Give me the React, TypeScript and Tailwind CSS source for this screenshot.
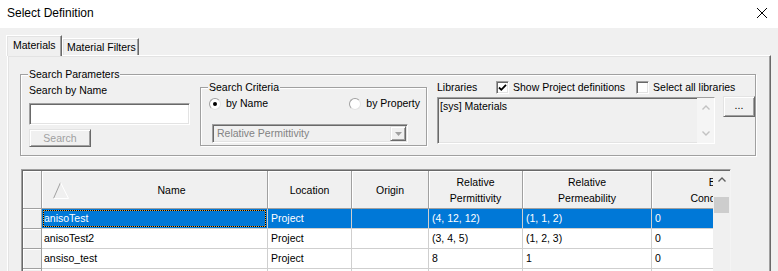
import React from "react";

// classic win32 3D edges
const raised =
  "border border-t-[#e3e3e3] border-l-[#e3e3e3] border-r-[#696969] border-b-[#696969] shadow-[inset_1px_1px_0_#ffffff,inset_-1px_-1px_0_#a0a0a0]";
const sunken =
  "border border-t-[#a0a0a0] border-l-[#a0a0a0] border-r-white border-b-white shadow-[inset_1px_1px_0_#696969,inset_-1px_-1px_0_#e3e3e3]";
const etched = "border border-[#a0a0a0] shadow-[inset_1px_1px_0_#ffffff,1px_1px_0_#ffffff]";

const columns = [
  { cls: "w-[226px]", head: ["Name"] },
  { cls: "w-[84px]", head: ["Location"] },
  { cls: "w-[77px]", head: ["Origin"] },
  { cls: "w-[94px]", head: ["Relative", "Permittivity"] },
  { cls: "w-[129px]", head: ["Relative", "Permeability"] },
  { cls: "w-[135px]", head: ["Bulk", "Conductivity"] },
];

const rows = [
  ["anisoTest", "Project", "", "(4, 12, 12)", "(1, 1, 2)", "0"],
  ["anisoTest2", "Project", "", "(3, 4, 5)", "(1, 2, 3)", "0"],
  ["ansiso_test", "Project", "", "8", "1", "0"],
  ["", "", "", "", "", ""],
];

function Chevron({ down, color }: { down?: boolean; color: string }) {
  return (
    <svg width="8" height="5" viewBox="0 0 8 5">
      <polyline
        points={down ? "0.5,0.5 4,4 7.5,0.5" : "0.5,4.5 4,1 7.5,4.5"}
        fill="none"
        stroke={color}
        strokeWidth="1.4"
      />
    </svg>
  );
}

function Radio({ checked }: { checked?: boolean }) {
  return (
    <span className="w-[12px] h-[12px] rounded-full bg-white border border-t-[#a0a0a0] border-l-[#a0a0a0] border-r-[#e3e3e3] border-b-[#e3e3e3] flex items-center justify-center shrink-0">
      {checked && <span className="w-[4px] h-[4px] rounded-full bg-black" />}
    </span>
  );
}

function Checkbox({ checked }: { checked?: boolean }) {
  return (
    <span className={`w-[13px] h-[13px] bg-white shrink-0 flex items-center justify-center ${sunken}`}>
      {checked && (
        <svg width="9" height="9" viewBox="0 0 9 9">
          <polyline points="1,4.5 3.3,6.8 8,1.8" fill="none" stroke="#000" strokeWidth="1.8" />
        </svg>
      )}
    </span>
  );
}

function GroupBox({ title, className, children }: { title: string; className: string; children: React.ReactNode }) {
  return (
    <div className={`relative ${etched} ${className}`}>
      <span className="absolute -top-[7px] left-[7px] px-px bg-[#f0f0f0]">{title}</span>
      {children}
    </div>
  );
}

function Grid() {
  return (
    <div className="ml-[13px] mt-[13px] w-[710px] h-[120px] border border-t-[#a0a0a0] border-l-[#a0a0a0] border-r-[#f4f4f4] border-b-white">
      <div className="flex h-full border-t border-l border-[#696969] bg-white">
        <div className="flex-1 overflow-hidden">
          <div className="flex h-[38px]">
            <div className="w-[19px] shrink-0 bg-[#f0f0f0] border-r border-b border-[#a0a0a0] shadow-[inset_1px_1px_0_#ffffff]" />
            {columns.map((c, i) => (
              <div
                key={i}
                className={`${c.cls} shrink-0 relative bg-[#f0f0f0] border-r border-b border-[#a0a0a0] shadow-[inset_1px_1px_0_#ffffff] flex flex-col items-center justify-center leading-[16px] whitespace-nowrap ${i === 0 ? "pl-[34px]" : ""}`}
              >
                {i === 0 && (
                  <svg className="absolute left-[11px] top-[11px]" width="16" height="17" viewBox="0 0 16 17">
                    <line x1="0.5" y1="16.5" x2="7.5" y2="0.5" stroke="#a0a0a0" />
                    <line x1="7.5" y1="0.5" x2="15.5" y2="16.5" stroke="#ffffff" />
                    <line x1="0.5" y1="16.5" x2="15.5" y2="16.5" stroke="#ffffff" />
                  </svg>
                )}
                {c.head.map((h) => (
                  <span key={h}>{h}</span>
                ))}
              </div>
            ))}
          </div>
          {rows.map((r, ri) => {
            const sel = ri === 0;
            return (
              <div key={ri} className="flex h-[20px]">
                <div className="w-[19px] shrink-0 bg-[#f0f0f0] border-r border-b border-[#a0a0a0] shadow-[inset_1px_1px_0_#ffffff]" />
                {columns.map((c, ci) =>
                  sel && ci === 0 ? (
                    <div key={ci} className={`${c.cls} shrink-0 border-r border-b border-[#cfcfcf] bg-[#0078d7] p-px`}>
                      <div className="h-full border border-dotted border-black bg-[#e8a33c]">
                        <div className="h-full bg-[#0078d7] text-white flex items-center whitespace-nowrap">{r[ci]}</div>
                      </div>
                    </div>
                  ) : (
                    <div
                      key={ci}
                      className={`${c.cls} shrink-0 border-r border-b border-[#cfcfcf] flex items-center whitespace-nowrap ${ci === 0 ? "pl-[2px]" : "pl-[3px]"} ${sel ? "bg-[#0078d7] text-white" : "bg-white"}`}
                    >
                      {r[ci]}
                    </div>
                  )
                )}
              </div>
            );
          })}
        </div>
        <div className="w-[17px] shrink-0 bg-[#f0f0f0] flex flex-col items-center">
          <div className="h-[17px] flex items-center justify-center">
            <Chevron color="#606060" />
          </div>
          <div className="mt-[9px] w-[15px] h-[16px] bg-[#cdcdcd]" />
        </div>
      </div>
    </div>
  );
}

export default function App() {
  return (
    <div className="w-[778px] h-[271px] overflow-hidden flex flex-col bg-[#f0f0f0] text-black text-[10.5px] leading-[13px] font-['Liberation_Sans',Arial,sans-serif]">
      {/* title bar */}
      <div className="h-[28px] shrink-0 bg-white flex items-center justify-between pl-[7px] pr-[11px] pb-[2px]">
        <span className="text-[12px] leading-[16px]">Select Definition</span>
        <svg width="10" height="10" viewBox="0 0 10 10">
          <line x1="0" y1="0" x2="10" y2="10" stroke="#000" strokeWidth="1" />
          <line x1="10" y1="0" x2="0" y2="10" stroke="#000" strokeWidth="1" />
        </svg>
      </div>

      {/* tabs */}
      <div className="flex items-end pl-[6px] pt-[7px] shrink-0">
        <div className="relative z-10 -mb-px h-[21px] w-[56px] bg-[#f0f0f0] border border-b-0 border-t-white border-l-white border-r-[#696969] shadow-[inset_-1px_0_0_#a0a0a0,inset_1px_1px_0_#e3e3e3] pl-[6px] pt-[3px]">
          Materials
        </div>
        <div className="h-[17px] w-[77px] bg-[#f0f0f0] border border-b-0 border-t-white border-l-white border-r-[#696969] shadow-[inset_-1px_0_0_#a0a0a0,inset_1px_1px_0_#e3e3e3] pl-[4px] pt-[2px] whitespace-nowrap">
          Material Filters
        </div>
      </div>

      {/* tab page */}
      <div className="mx-[7px] h-[240px] shrink-0 border border-t-white border-l-white border-r-[#696969] border-b-[#696969] shadow-[inset_-1px_0_0_#a0a0a0,inset_1px_1px_0_#e3e3e3]">
        <GroupBox title="Search Parameters" className="ml-[12px] mt-[18px] w-[736px] h-[82px] flex pl-[8px]">
          {/* search by name */}
          <div className="w-[161px] pt-[9px] flex flex-col shrink-0">
            <span>Search by Name</span>
            <div className={`mt-[6px] h-[22px] w-[161px] bg-white ${sunken}`} />
            <div className={`mt-[4px] h-[18px] w-[62px] flex items-center justify-center text-[#a0a0a0] ${raised}`}>
              Search
            </div>
          </div>

          {/* search criteria */}
          <GroupBox title="Search Criteria" className="ml-[10px] mt-[12px] w-[227px] h-[59px] shrink-0 pl-[8px] pt-[9px]">
            <div className="flex justify-between pr-[6px] h-[13px] items-center">
              <div className="flex items-center gap-[5px]">
                <Radio checked />
                <span>by Name</span>
              </div>
              <div className="flex items-center gap-[5px]">
                <Radio />
                <span>by Property</span>
              </div>
            </div>
            <div className={`mt-[14px] ml-[3px] w-[196px] h-[19px] flex items-center justify-between p-px bg-[#f0f0f0] ${sunken}`}>
              <span className="pl-[3px] text-[#838383] whitespace-nowrap">Relative Permittivity</span>
              <div className={`w-[16px] h-[15px] flex items-center justify-center ${raised}`}>
                <svg width="7" height="4" viewBox="0 0 7 4">
                  <polygon points="0,0 7,0 3.5,4" fill="#a0a0a0" />
                </svg>
              </div>
            </div>
          </GroupBox>

          {/* libraries */}
          <div className="ml-[10px] pt-[6px] flex flex-col shrink-0">
            <div className="flex items-center h-[13px] whitespace-nowrap">
              <span className="w-[59px]">Libraries</span>
              <Checkbox checked />
              <span className="ml-[4px]">Show Project definitions</span>
              <span className="ml-[11px]">
                <Checkbox />
              </span>
              <span className="ml-[4px]">Select all libraries</span>
            </div>
            <div className="flex items-start mt-[2px]">
              <div className={`mt-px w-[278px] h-[47px] flex bg-[#f0f0f0] ${sunken}`}>
                <span className="flex-1 pl-[2px] pt-[2px]">[sys] Materials</span>
                <div className="w-[17px] h-full bg-[#f5f5f5] flex flex-col justify-between items-center py-[7px]">
                  <Chevron color="#c2c2c2" />
                  <Chevron down color="#c2c2c2" />
                </div>
              </div>
              <div className={`ml-[8px] w-[32px] h-[21px] flex items-center justify-center pb-[3px] ${raised}`}>
                ...
              </div>
            </div>
          </div>
        </GroupBox>

        <Grid />
      </div>
    </div>
  );
}
